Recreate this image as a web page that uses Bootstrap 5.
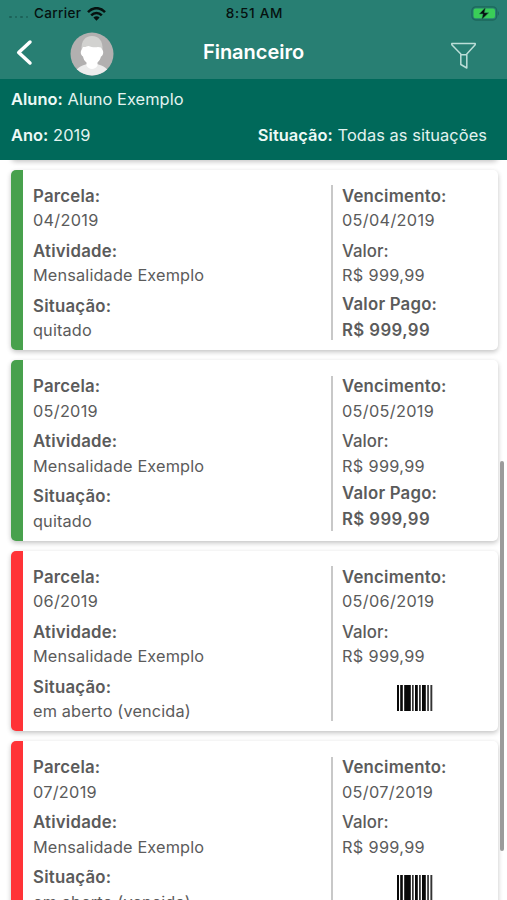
<!DOCTYPE html>
<html lang="pt-BR">
<head>
<meta charset="utf-8">
<meta name="viewport" content="width=device-width, initial-scale=1">
<title>Financeiro</title>
<link href="https://cdn.jsdelivr.net/npm/bootstrap@5.3.0/dist/css/bootstrap.min.css" rel="stylesheet">
<style>
html,body{height:100%;overflow:hidden}
body{font-family:Inter,"Liberation Sans",sans-serif;font-size:16.3px;line-height:24.5px;letter-spacing:.15px;color:#5b5b5b;background:#fff}
.screen{height:900px}
.topbar{background:#287f73;height:79px}
.status{height:27px;font-size:13.5px;line-height:27px;font-weight:500;color:#06110f;letter-spacing:.35px;padding:0 7px 0 9px}
.status>div{flex:1 1 0}
.status .clock{font-size:13.6px;letter-spacing:.7px}
.dots{gap:3px;margin:7px 6px 0 0}
.dots i{width:2.5px;height:2.5px;border-radius:50%;background:#1b6157}
.signal{margin-left:6px}
.titlebar{height:52px;color:#fff}
.titlebar>div{flex:1 1 0}
.titlebar h1{font-size:20px;font-weight:600;letter-spacing:-.02px;line-height:50px;padding-bottom:2px}
.back{margin:0 37px 0 16px}
.avatar{margin-top:2px}
.funnel{margin:5px 30px 0 0}
.filters{background:#00695a;height:80.5px;color:#e3f3f0;padding:8px 20px 0 11px;font-size:16.4px;letter-spacing:.06px}
.filters b{font-weight:600;color:#eefaf7}
.filters .line2{margin-top:11px}
.list{padding:0 9px 0 11px}
.ticket{height:180.6px;margin-bottom:10px;border:0;border-left:12px solid #48a14d;border-radius:5px;box-shadow:0 2px 5px rgba(0,0,0,.24);background:#fff}
.ticket.late{border-left-color:#ff3337}
.above{height:10px;margin:-10px 0 10px;border-radius:5px;box-shadow:0 2px 5px rgba(0,0,0,.22)}
.ticket dl{margin:0;padding-top:14px}
.ticket dt{font-weight:600;font-size:16.8px;letter-spacing:.22px}
.ticket dd{margin:0 0 6px}
.ticket .left{padding-left:10px;flex:1 1 auto}
.ticket dd.date{letter-spacing:.28px}
.rule{width:2px;height:155px;margin-top:15.6px;background:#c8c8c8}
.ticket .right{width:165px;padding-left:9px}
.right dd{letter-spacing:.32px}
.right dt.paid{margin-top:-1.5px}
.right dd.paid{font-weight:600;font-size:16.8px;margin-top:1.5px;letter-spacing:.4px}
.second .right dt.paid{margin-top:-3.5px}
.ticket .right dt.val{font-weight:500;letter-spacing:0}
.bars{display:block;margin:16px 0 0 55px}
.thumb{right:3px;top:461px;width:4px;height:390px;border-radius:2px;background:#9b9b9b}
</style>
<script src="https://cdn.jsdelivr.net/npm/bootstrap@5.3.0/dist/js/bootstrap.bundle.min.js"></script>
</head>
<body>
<svg width="0" height="0" class="position-absolute">
<symbol id="barcode" viewBox="0 0 36 26"><path d="M0 0h2v26H0zM3.2 0h2.6v26H3.2zM7.2 0h6.600v26H7.2zM18 0h2.800v26H18zM25 0h3.800v26H25z" fill="#080808"/><path d="M15 0h1.700v26H15zM22 0h1.800v26H22zM30.200 0h1.700v26h-1.700zM33.400 0h1.900v26h-1.900z" fill="#333"/></symbol>
</svg>
<main class="screen position-relative overflow-hidden d-flex flex-column">
<header class="topbar flex-shrink-0">
<div class="status d-flex align-items-center">
<div class="d-flex align-items-center"><span class="dots d-flex"><i></i><i></i><i></i><i></i></span>Carrier
<svg class="signal" width="19" height="14" viewBox="0 0 19 14"><g fill="none" stroke="#06110f" stroke-width="2.5"><path d="M1 5.2C6-.2 13-.2 18 5.2"/><path d="M4.2 8.4c3-3.2 7.6-3.2 10.6 0"/></g><path d="M6.4 10.6c1.8-1.7 4.4-1.7 6.2 0L9.500 13.700z" fill="#06110f"/></svg></div>
<span class="clock">8:51 AM</span>
<div class="d-flex justify-content-end"><svg width="29" height="15" viewBox="0 0 31 15" preserveAspectRatio="none"><rect x="1" y=".8" width="26.500" height="13.200" rx="4" fill="none" stroke="#1d685c" stroke-width="1.300"/><rect x="2.700" y="2.500" width="23" height="9.800" rx="2.200" fill="#3ace58"/><path d="M28.800 5.300c1.500.5 1.500 3.700 0 4.200z" fill="#1d685c"/><path d="M15.500 1.200 8.700 8h4.100l-1.500 5.700L19 6.700h-4.600z" fill="#06110f" stroke="#2b8f5e" stroke-width=".6"/></svg></div>
</div>
<div class="titlebar d-flex align-items-center">
<div class="d-flex align-items-center">
<svg class="back" width="17" height="28" viewBox="0 0 17 28"><path d="M14 3 2.700 13.500 14 24" fill="none" stroke="#fff" stroke-width="3.500" stroke-linecap="round" stroke-linejoin="round"/></svg>
<svg class="avatar" width="44" height="44" viewBox="0 0 44 44"><defs><clipPath id="round"><circle cx="22" cy="22" r="21.500"/></clipPath></defs><g clip-path="url(#round)"><path fill="#b2b0b0" d="M0 0h44v44H0z"/><path d="M4 44c1-8 7-10 13-12h10c6 2 12 4 13 12z" fill="#ececec"/><path d="M11.500 18C11 9 15 4 22 4s11 5 10.500 14l-2 4h-17z" fill="#d2d2d0"/><path d="M13 15c3 .3 4-1 5.500-1 3 1.500 7 1.500 9.500 1l3 .5 1.500 2.500c1.500 2 .5 6-1.500 6.500-.5 2.500-2 4.500-3.500 6v3c-2 4.500-9 4.500-11 0v-3c-2-1.500-3-3.500-3.500-6-2-1-3-4.500-1.500-6.500z" fill="#fff"/></g></svg>
</div>
<h1 class="m-0">Financeiro</h1>
<div class="d-flex justify-content-end"><svg class="funnel" width="27" height="28" viewBox="0 0 27 28"><path d="M1.800 1.500h23.400v1.300L16.800 12v14l-6-3.500V12L1.800 2.800zM10.800 12.800h6" fill="none" stroke="#bcded8" stroke-width="1.500" stroke-linejoin="round"/></svg></div>
</div>
</header>
<section class="filters flex-shrink-0">
<div><b>Aluno:</b> Aluno Exemplo</div>
<div class="line2 d-flex justify-content-between"><span><b>Ano:</b> 2019</span><span><b>Situação:</b> Todas as situações</span></div>
</section>
<section class="list overflow-hidden flex-grow-1">
<div class="above"></div>
<article class="ticket d-flex">
<dl class="left"><dt>Parcela:</dt><dd class="date">04/2019</dd><dt>Atividade:</dt><dd>Mensalidade Exemplo</dd><dt>Situação:</dt><dd>quitado</dd></dl>
<div class="rule"></div>
<dl class="right"><dt>Vencimento:</dt><dd>05/04/2019</dd><dt class="val">Valor:</dt><dd>R$ 999,99</dd><dt class="paid">Valor Pago:</dt><dd class="paid">R$ 999,99</dd></dl>
</article>
<article class="ticket second d-flex">
<dl class="left"><dt>Parcela:</dt><dd class="date">05/2019</dd><dt>Atividade:</dt><dd>Mensalidade Exemplo</dd><dt>Situação:</dt><dd>quitado</dd></dl>
<div class="rule"></div>
<dl class="right"><dt>Vencimento:</dt><dd>05/05/2019</dd><dt class="val">Valor:</dt><dd>R$ 999,99</dd><dt class="paid">Valor Pago:</dt><dd class="paid">R$ 999,99</dd></dl>
</article>
<article class="ticket late d-flex">
<dl class="left"><dt>Parcela:</dt><dd class="date">06/2019</dd><dt>Atividade:</dt><dd>Mensalidade Exemplo</dd><dt>Situação:</dt><dd>em aberto (vencida)</dd></dl>
<div class="rule"></div>
<dl class="right"><dt>Vencimento:</dt><dd>05/06/2019</dd><dt class="val">Valor:</dt><dd>R$ 999,99</dd><dd><svg class="bars" width="36" height="26"><use href="#barcode"/></svg></dd></dl>
</article>
<article class="ticket late d-flex">
<dl class="left"><dt>Parcela:</dt><dd class="date">07/2019</dd><dt>Atividade:</dt><dd>Mensalidade Exemplo</dd><dt>Situação:</dt><dd>em aberto (vencida)</dd></dl>
<div class="rule"></div>
<dl class="right"><dt>Vencimento:</dt><dd>05/07/2019</dd><dt class="val">Valor:</dt><dd>R$ 999,99</dd><dd><svg class="bars" width="36" height="26"><use href="#barcode"/></svg></dd></dl>
</article>
</section>
<div class="thumb position-absolute"></div>
</main>
</body>
</html>
